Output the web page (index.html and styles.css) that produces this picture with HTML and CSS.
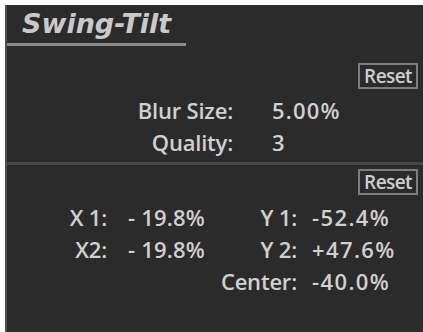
FILE: index.html
```html
<!DOCTYPE html>
<html>
<head>
<meta charset="utf-8">
<link rel="stylesheet" href="styles.css">
</head>
<body>
<div class="panel">
  <div class="title-wrap"><div class="title">Swing-Tilt</div></div>
  <section class="section first">
    <div class="btn-row"><span class="reset">Reset</span></div>
    <div class="grid-top">
      <span class="label">Blur Size:</span><span class="value">5.00%</span>
      <span class="label">Quality:</span><span class="value">3</span>
    </div>
  </section>
  <section class="section second">
    <div class="btn-row"><span class="reset">Reset</span></div>
    <div class="grid-bottom">
      <span class="label">X 1:</span><span class="value v1">- 19.8%</span>
      <span class="label">Y 1:</span><span class="value v2">-52.4%</span>
      <span class="label">X2:</span><span class="value v1">- 19.8%</span>
      <span class="label">Y 2:</span><span class="value v2">+47.6%</span>
      <span class="label c3">Center:</span><span class="value v2">-40.0%</span>
    </div>
  </section>
</div>
</body>
</html>
```

FILE: styles.css
```css
html, body {
  margin: 0;
  padding: 0;
  background: #ffffff;
}
body {
  padding: 5px 0 0 5px;
  height: 332px;
  box-sizing: border-box;
  overflow: hidden;
}
.panel {
  width: 418px;
  height: 327px;
  background: #2b2b2b;
  border-left: 2px solid #4e4e4e;
  box-sizing: border-box;
  color: #d0d0d0;
  font-family: "Open Sans", "DejaVu Sans", sans-serif;
  font-weight: 600;
  white-space: nowrap;
}
.title-wrap {
  padding-top: 5px;
}
.title {
  width: 179px;
  box-sizing: border-box;
  padding: 0 0 6px 15px;
  border-bottom: 3px solid #8a8a8a;
  font-family: "DejaVu Sans", sans-serif;
  font-weight: bold;
  font-style: italic;
  font-size: 27px;
  line-height: 27px;
  color: #c9c9c9;
}
.section.first {
  padding: 17px 0 4.5px 0;
  border-bottom: 3px solid #474747;
}
.section.second {
  padding-top: 4px;
}
.btn-row {
  display: flex;
  justify-content: flex-end;
  padding-right: 5px;
  height: 26px;
  margin-bottom: 4.5px;
}
.section.second .btn-row {
  margin-bottom: 5.5px;
}
.reset {
  width: 60px;
  height: 26px;
  box-sizing: border-box;
  border: 2px solid #7c7c7c;
  font-size: 19px;
  line-height: 22px;
  text-align: center;
  letter-spacing: -0.6px;
  color: #cdcdcd;
}
.grid-top, .grid-bottom {
  display: grid;
  font-size: 22px;
  line-height: 32px;
  letter-spacing: -0.2px;
}
.grid-top {
  grid-template-columns: 226px auto;
}
.grid-top .label {
  text-align: right;
}
.grid-top .value {
  padding-left: 39px;
  letter-spacing: 1.2px;
}
.grid-bottom {
  grid-template-columns: 100px 102px 88px auto;
}
.grid-bottom .label {
  text-align: right;
}
.grid-bottom .value {
  letter-spacing: 1.4px;
}
.grid-bottom .v1 {
  padding-left: 21px;
  letter-spacing: 0.2px;
}
.grid-bottom .v2 {
  padding-left: 15px;
}
.grid-bottom .c3 {
  grid-column: 3;
}
```
